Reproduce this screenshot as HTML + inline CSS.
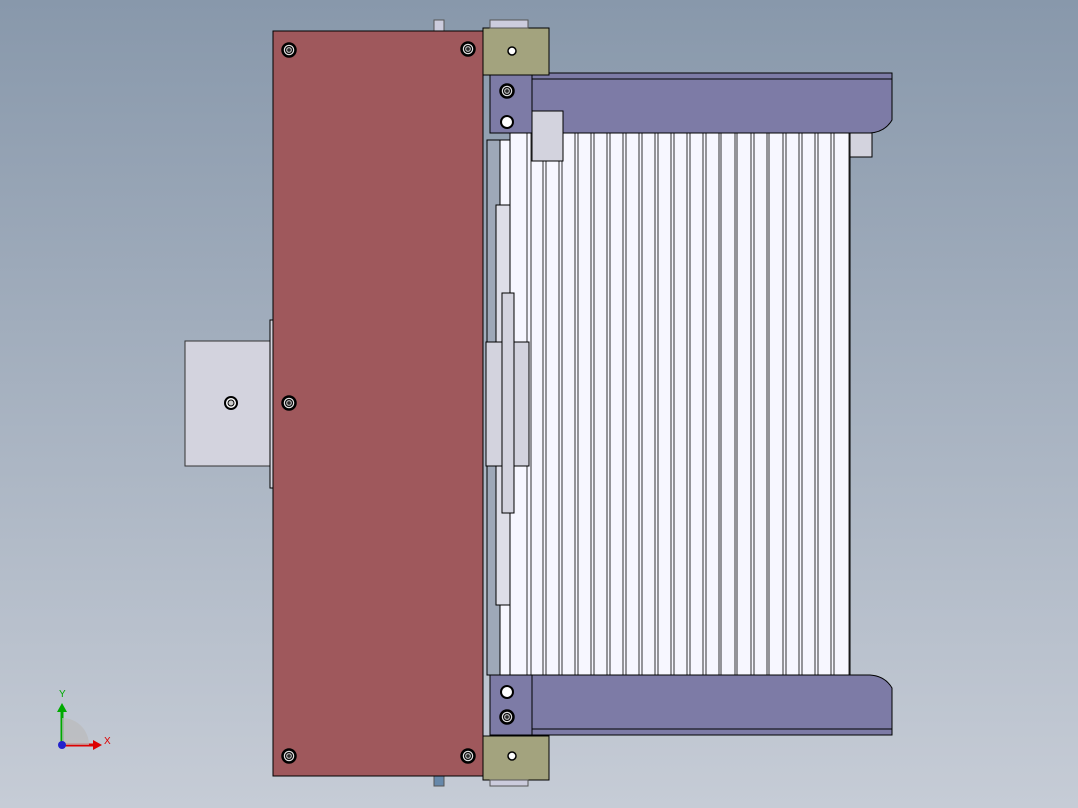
<!DOCTYPE html><html><head><style>
body{margin:0;width:1078px;height:808px;overflow:hidden;background:linear-gradient(#8898ab,#c6ccd6);font-family:"Liberation Sans",sans-serif}
</style></head><body>
<svg width="1078" height="808" style="position:absolute;left:0;top:0" stroke="#000" stroke-width="1">
<defs><g id="scr"><circle r="6.5" fill="#ddd" stroke="#000" stroke-width="2.5"/><circle r="3.5" fill="#aaa" stroke="#000"/><path d="M-2 0h4M0-2v4" stroke-width="1"/></g></defs>
<rect x="510" y="133" width="340" height="542" fill="#f7f7ff"/>
<g stroke-width="0.8">
<path d="M510 133v542M527 133v542M531 133v542M543 133v542M546 133v542M559 133v542M562 133v542M575 133v542M578 133v542M591 133v542M594 133v542M607 133v542M610 133v542M623 133v542M626 133v542M639 133v542M642 133v542M655 133v542M658 133v542M671 133v542M674 133v542M687 133v542M690 133v542M703 133v542M706 133v542M719 133v542M721 133v542M735 133v542M737 133v542M751 133v542M754 133v542M767 133v542M769 133v542M783 133v542M786 133v542M799 133v542M802 133v542M815 133v542M818 133v542M831 133v542M834 133v542M849 133v542"/>
</g>
<rect x="850" y="133" width="22" height="24" fill="#d3d3de"/>
<rect x="487" y="140" width="13" height="535" fill="#9ea8b8"/>
<rect x="500" y="140" width="10" height="535" fill="#f7f7ff"/>
<rect x="496" y="205" width="14" height="400" fill="#dedee8"/>
<rect x="486" y="342" width="43" height="124" fill="#d3d3de"/>
<rect x="502" y="293" width="12" height="220" fill="#d3d3de"/>
<rect x="185" y="341" width="88" height="125" fill="#d3d3de" stroke="#333"/>
<rect x="270" y="320" width="4" height="168" fill="#d3d3de"/>
<circle cx="231" cy="403" r="6" fill="#fff" stroke-width="2"/><circle cx="231" cy="403" r="3" fill="#ccc"/>
<path d="M490 73H892V120Q885 132 870 133H490Z" fill="#7d7ba6"/>
<path d="M490 79H892"/>
<rect x="490" y="73" width="42" height="60" fill="#7d7ba6"/>
<rect x="532" y="111" width="31" height="50" fill="#d3d3de"/>
<path d="M490 675H870Q885 676 892 688V735H490Z" fill="#7d7ba6"/>
<path d="M490 729H892"/>
<rect x="490" y="675" width="42" height="60" fill="#7d7ba6"/>
<rect x="483" y="28" width="66" height="47" fill="#a3a37e"/>
<rect x="490" y="20" width="38" height="8" fill="#ccd" stroke="#555"/>
<rect x="483" y="736" width="66" height="44" fill="#a3a37e"/>
<rect x="490" y="780" width="38" height="6" fill="#ccd" stroke="#555"/>
<circle cx="512" cy="51" r="4" fill="#fff" stroke-width="1.5"/>
<circle cx="512" cy="756" r="4" fill="#fff" stroke-width="1.5"/>
<rect x="434" y="20" width="10" height="11" fill="#ccd" stroke="#555"/>
<rect x="434" y="776" width="10" height="10" fill="#6688aa" stroke="#555"/>
<rect x="273" y="31" width="210" height="745" fill="#9f585c"/>
<use href="#scr" x="289" y="50"/><use href="#scr" x="468" y="49"/>
<use href="#scr" x="289" y="403"/><use href="#scr" x="289" y="756"/><use href="#scr" x="468" y="756"/>
<use href="#scr" x="507" y="91"/><use href="#scr" x="507" y="717"/>
<circle cx="507" cy="122" r="6" fill="#fff" stroke-width="2"/>
<circle cx="507" cy="692" r="6" fill="#fff" stroke-width="2"/>
<path d="M62 745V710" stroke="#0a0" stroke-width="3"/><path d="M57 712l5-9 5 9z" fill="#0a0" stroke="none"/>
<path d="M62 745H95" stroke="#d00" stroke-width="3"/><path d="M93 740l9 5-9 5z" fill="#d00" stroke="none"/>
<path d="M62 745V718A27 27 0 0 1 89 745Z" fill="#bbb" stroke="none" opacity=".7"/>
<circle cx="62" cy="745" r="4" fill="#22c" stroke="none"/>
<text x="59" y="697" font-size="10" fill="#0a0" stroke="none">Y</text>
<text x="104" y="744" font-size="10" fill="#d00" stroke="none">X</text>
</svg>
</body></html>
